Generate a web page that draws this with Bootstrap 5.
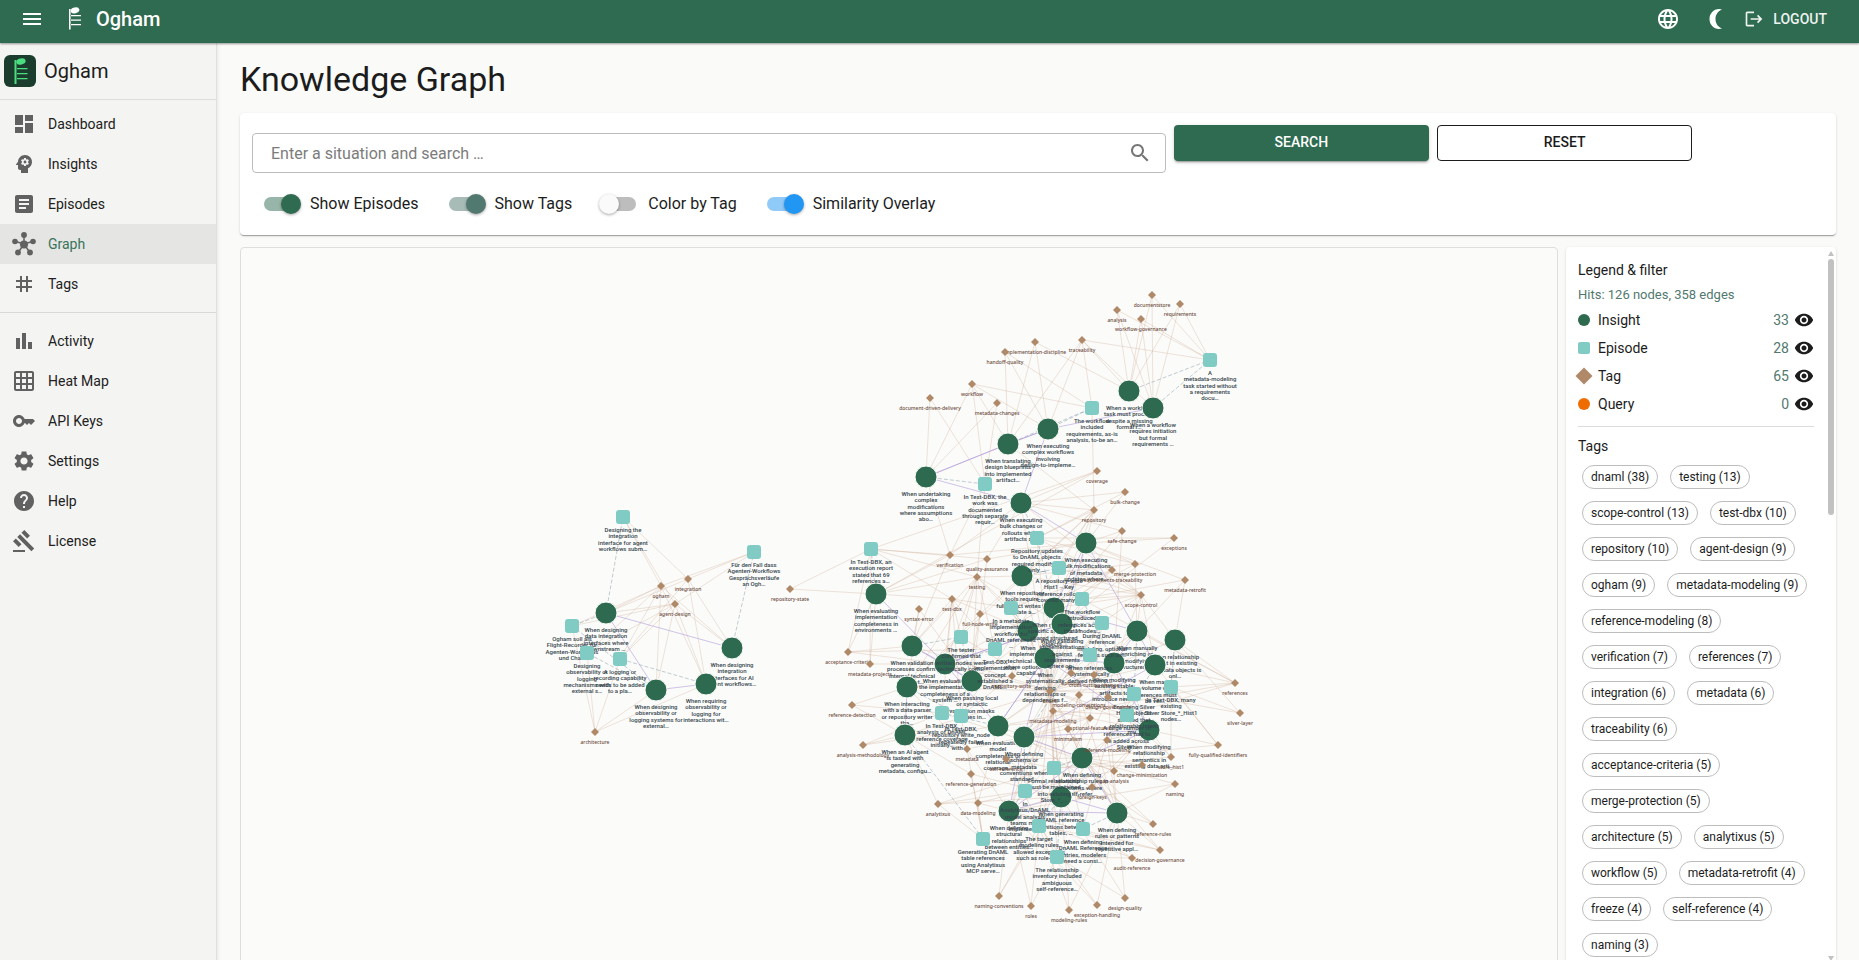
<!DOCTYPE html>
<html lang="en">
<head>
<meta charset="utf-8">
<meta name="viewport" content="width=device-width, initial-scale=1">
<title>Ogham – Knowledge Graph</title>
<link href="https://cdn.jsdelivr.net/npm/bootstrap@5.3.0/dist/css/bootstrap.min.css" rel="stylesheet">
<style>
  :root { --green: #2e6b50; --ink: #1c1c1c; --muted: #52796f; --line: #dededd; --paper: #fafaf8; }
  body { font-family: Roboto, "Liberation Sans", sans-serif; background: var(--paper); color: var(--ink); font-size: 16px; line-height: 24px; }
  svg.ico { width: 24px; height: 24px; fill: currentColor; flex: none; display: block; }
  svg.ico-sm { width: 20px; height: 20px; }
  .elev { box-shadow: 0 2px 1px -1px rgba(0,0,0,.2), 0 1px 1px 0 rgba(0,0,0,.14), 0 1px 3px 0 rgba(0,0,0,.12); }

  .topbar { height: 43px; flex: none; background: var(--green); color: #fff; padding: 0 24px 5px 20px; z-index: 2;
    box-shadow: 0 1px 2px rgba(0,0,0,.4); }
  .topbar button { background: none; border: 0; padding: 0; color: inherit; }
  .brand-top { font-size: 20px; font-weight: 500; margin-left: 4px; }
  .logout { font-size: 14px; font-weight: 500; gap: 9px; opacity: .92; }

  .drawer { width: 217px; flex: none; background: #f4f4f2; border-right: 1px solid var(--line); box-shadow: 1px 0 4px rgba(0,0,0,.08); }
  .drawer-head { height: 57px; padding-left: 4px; gap: 8px; border-bottom: 1px solid var(--line); font-size: 20px; }
  .drawer-head svg { width: 32px; height: 32px; }
  .drawer .nav-link { height: 40px; padding: 0 12px; gap: 12px; color: #212121; font-size: 14px; }
  .drawer .nav-link svg { color: #616161; }
  .drawer .nav-link.active { background: #e5e5e3; color: #38745a; }
  .drawer hr { margin: 8px 0; border-top: 1px solid #d8d8d7; opacity: 1; }

  .page { padding: 15px 23px 0; min-width: 0; }
  h1 { font-size: 34px; line-height: 42px; font-weight: 400; margin-bottom: 13px; }
  .search-card { border: 0; border-radius: 4px; padding: 12px; background: #fff; }
  .search-card .row { --bs-gutter-x: 8px; }
  .query { margin-top: 8px; height: 40px; border: 1px solid #bdbdbd; border-radius: 4px; padding: 0 13px 0 18px; color: #757575; }
  .query input { border: 0; padding: 2px 0 0; background: none; outline: 0; min-width: 0; }
  .query input::placeholder { color: #7c7c7c; }
  .query svg { color: #757575; }
  .act { height: 36px; border-radius: 4px; font-size: 14px; font-weight: 500; padding: 0 0 2px; }
  .act-go { background: var(--green); color: #fff; border: 0; box-shadow: 0 3px 1px -2px rgba(0,0,0,.2), 0 2px 2px rgba(0,0,0,.14), 0 1px 5px rgba(0,0,0,.12); }
  .act-reset { border: 1px solid #1c1c1c; color: #1c1c1c; background: #fff; }

  .toggles { gap: 18px; margin-top: 12px; }
  .toggle { height: 38px; padding-left: 12px; gap: 12px; cursor: pointer; --on: #2e6b50; --track: #97b5a8; }
  .toggle.teal { --on: #52796f; --track: #a8bcb7; }
  .toggle.blue { --on: #2196f3; --track: #90caf9; }
  .toggle input { appearance: none; position: relative; width: 34px; height: 14px; margin: 0; border-radius: 7px; background: #bdbdbd; }
  .toggle input::before { content: ""; position: absolute; top: -3px; left: -3px; width: 20px; height: 20px; border-radius: 50%;
    background: #fafafa; box-shadow: 0 1px 3px rgba(0,0,0,.35); }
  .toggle input:checked { background: var(--track); }
  .toggle input:checked::before { left: 17px; background: var(--on); }

  .stage { height: calc(100vh - 241px); gap: 8px; margin-top: 12px; }
  .canvas { min-width: 0; border: 1px solid var(--line); border-radius: 4px; background: #fbfbf9; overflow: hidden; }
  .canvas svg { width: 100%; height: 100%; display: block; }
  .node-label { font-family: Roboto, sans-serif; font-size: 6px; font-weight: 500; fill: #37474f; text-anchor: middle; }
  .tag-label { font-family: "Noto Sans", sans-serif; font-size: 5px; font-weight: 500; fill: #6d4c41; text-anchor: middle; }
  .e-tag { stroke: #c49a80; stroke-opacity: .27; }
  .e-src { stroke: #90a4ae; stroke-opacity: .55; stroke-dasharray: 4 2; }
  .e-sim { stroke: #b39ddb; stroke-opacity: .6; }

  .legend-panel { width: 270px; flex: none; background: #fff; border-radius: 4px; overflow: hidden; }
  .legend-body { padding: 13px 12px 0; width: 260px; }
  .cap-title { font-size: 14px; line-height: 20px; font-weight: 400; margin: 0 0 5px; }
  .hits { font-size: 13px; line-height: 20px; color: var(--muted); margin-bottom: 1px; }
  .kind { height: 28px; font-size: 14px; gap: 8px; }
  .kind .count { color: var(--muted); }
  .kind button { border: 0; background: none; padding: 0; margin-left: -3px; color: #1c1c1c; }
  .swatch { width: 12px; height: 12px; }
  .legend-body hr { margin: 8px 0 9px; border-top: 1px solid #dcdcdc; opacity: 1; }
  .cap-title.tags-title { margin-bottom: 9px; }
  .chips { gap: 12px; padding-left: 4px; }
  .chip { height: 24px; border: 1px solid #bdbdbd; border-radius: 12px; background: #fff; padding: 0 8px; font-size: 12px; line-height: 22px; color: #1c1c1c; }
  .rail { width: 10px; padding: 4px 2px 5px; }
  .rail i { width: 6px; height: 256px; margin-top: 3px; border-radius: 3px; background: #c1c1c1; }
  .rail svg { width: 6px; height: 5px; fill: #c1c1c1; display: block; }
</style>
</head>
<body class="vh-100 overflow-hidden d-flex flex-column">

<svg class="d-none" aria-hidden="true">
  <symbol id="eye" viewBox="0 0 24 24"><path d="M12 4.500C7 4.500 2.730 7.610 1 12c1.730 4.390 6 7.500 11 7.500s9.270-3.110 11-7.500c-1.730-4.390-6-7.500-11-7.500zM12 17c-2.760 0-5-2.240-5-5s2.240-5 5-5 5 2.240 5 5-2.240 5-5 5zm0-8c-1.660 0-3 1.340-3 3s1.340 3 3 3 3-1.340 3-3-1.340-3-3-3z"/></symbol>
</svg>

<header class="topbar d-flex align-items-center">
  <button type="button" aria-label="Menu"><svg class="ico" viewBox="0 0 24 24"><path d="M3 18h18v-2H3v2zm0-5h18v-2H3v2zm0-7v2h18V6H3z"/></svg></button>
  <svg class="ico ms-4" viewBox="0 0 24 24" aria-hidden="true"><path d="M1 2v20.500h1.600V2zM2 8h11v1.200H2zM2 12.500h11v1.200H2zM2 17h11v1.200H2z"/><ellipse cx="7" cy="3.400" rx="4.400" ry="2.900" transform="rotate(-15 7 3.400)"/></svg>
  <span class="brand-top me-auto">Ogham</span>
  <button type="button" aria-label="Language"><svg class="ico" viewBox="0 0 24 24"><path d="M11.990 2C6.470 2 2 6.480 2 12s4.470 10 9.990 10C17.520 22 22 17.520 22 12S17.520 2 11.990 2zm6.930 6h-2.950c-.32-1.250-.78-2.450-1.380-3.560 1.840.63 3.370 1.910 4.330 3.560zM12 4.040c.83 1.200 1.480 2.530 1.910 3.960h-3.820c.43-1.430 1.080-2.760 1.910-3.960zM4.260 14C4.100 13.360 4 12.690 4 12s.1-1.360.26-2h3.380c-.08.66-.14 1.320-.14 2s.06 1.340.14 2H4.260zm.82 2h2.950c.32 1.250.78 2.450 1.380 3.560-1.840-.63-3.370-1.900-4.330-3.560zm2.950-8H5.080c.96-1.660 2.490-2.930 4.330-3.560C8.810 5.550 8.350 6.750 8.030 8zM12 19.960c-.83-1.200-1.480-2.530-1.910-3.960h3.820c-.43 1.430-1.080 2.760-1.910 3.960zM14.340 14H9.660c-.09-.66-.16-1.320-.16-2s.07-1.350.16-2h4.680c.09.65.16 1.320.16 2s-.07 1.340-.16 2zm.25 5.560c.6-1.110 1.060-2.310 1.380-3.560h2.950c-.96 1.650-2.490 2.930-4.330 3.560zM16.360 14c.08-.66.14-1.320.14-2s-.06-1.340-.14-2h3.380c.16.64.26 1.310.26 2s-.1 1.360-.26 2h-3.380z"/></svg></button>
  <button type="button" class="ms-4" aria-label="Dark mode"><svg class="ico" viewBox="0 0 24 24"><path d="M15 2c1 0 2 .2 3 .5-4 1.500-6.500 5-6.500 9.500s2.500 8 6.500 9.500c-1 .3-2 .5-3 .5C9.500 22 5.500 17.500 5.500 12S9.500 2 15 2z"/></svg></button>
  <button type="button" class="logout d-flex align-items-center ms-3 pe-2"><svg class="ico ico-sm" viewBox="0 0 24 24"><path d="M17 7l-1.410 1.410L18.170 11H8v2h10.170l-2.580 2.580L17 17l5-5zM4 5h8V3H4c-1.100 0-2 .9-2 2v14c0 1.100.9 2 2 2h8v-2H4V5z"/></svg>LOGOUT</button>
</header>

<div class="d-flex flex-grow-1">
  <aside class="drawer">
    <div class="drawer-head d-flex align-items-center">
      <svg viewBox="0 0 32 32" aria-hidden="true"><rect width="32" height="32" rx="6" fill="#1b3d2e"/><g fill="#4ade80"><path d="M10.500 5v24h2V5zM12 13h11.500v1.300H12zM12 18h11.500v1.300H12zM12 23h11.500v1.300H12z"/><ellipse cx="17" cy="6.500" rx="4.700" ry="3" transform="rotate(-12 17 6.500)"/></g></svg>
      <span>Ogham</span>
    </div>
    <nav class="nav flex-column flex-nowrap pt-1">
      <a class="nav-link d-flex align-items-center" href="#"><svg class="ico" viewBox="0 0 24 24"><path d="M3 13h8V3H3v10zm0 8h8v-6H3v6zm10 0h8V11h-8v10zm0-18v6h8V3h-8z"/></svg>Dashboard</a>
      <a class="nav-link d-flex align-items-center" href="#"><svg class="ico" viewBox="0 0 24 24"><path d="M13 8.570c-.79 0-1.430.64-1.430 1.430s.64 1.430 1.430 1.430 1.430-.64 1.430-1.430-.64-1.430-1.430-1.430z"/><path d="M13 3C9.250 3 6.200 5.940 6.020 9.640L4.100 12.200c-.25.33-.01.8.4.8H6v3c0 1.100.9 2 2 2h1v3h7v-4.680c2.360-1.120 4-3.530 4-6.320 0-3.870-3.130-7-7-7zm3 7c0 .13-.01.26-.02.39l.83.66c.08.06.1.16.05.25l-.8 1.390c-.05.09-.16.12-.24.09l-.99-.4c-.21.16-.43.29-.67.39L14 13.830c-.01.1-.1.17-.2.17h-1.600c-.1 0-.18-.07-.2-.17l-.15-1.060c-.25-.1-.47-.23-.68-.39l-.99.4c-.09.03-.2 0-.25-.09l-.8-1.390c-.05-.08-.03-.19.05-.25l.84-.66c-.01-.13-.02-.26-.02-.39s.02-.27.04-.39l-.85-.66c-.08-.06-.1-.16-.05-.26l.8-1.380c.05-.09.15-.12.24-.09l1 .4c.2-.15.43-.29.67-.39L12 6.170c.02-.1.1-.17.2-.17h1.600c.1 0 .18.07.2.17l.15 1.060c.24.1.46.23.67.39l1-.4c.09-.03.2 0 .24.09l.8 1.380c.05.09.03.2-.05.26l-.85.66c.03.12.04.25.04.39z"/></svg>Insights</a>
      <a class="nav-link d-flex align-items-center" href="#"><svg class="ico" viewBox="0 0 24 24"><path d="M19 3H5c-1.100 0-2 .9-2 2v14c0 1.100.9 2 2 2h14c1.100 0 2-.9 2-2V5c0-1.100-.9-2-2-2zm-5 14H7v-2h7v2zm3-4H7v-2h10v2zm0-4H7V7h10v2z"/></svg>Episodes</a>
      <a class="nav-link active d-flex align-items-center" href="#" aria-current="page"><svg class="ico" viewBox="0 0 24 24"><path d="M12 4v8M3.500 9.500 12 12M20.500 9.500 12 12M6.500 20 12 12M17.500 20 12 12" stroke="currentColor" stroke-width="1.500"/><circle cx="12" cy="12.500" r="4"/><circle cx="12" cy="3" r="2.900"/><circle cx="3" cy="9.500" r="2.800"/><circle cx="21" cy="9.500" r="2.800"/><circle cx="6" cy="20.500" r="2.900"/><circle cx="18" cy="20.500" r="2.900"/></svg>Graph</a>
      <a class="nav-link d-flex align-items-center" href="#"><svg class="ico" viewBox="0 0 24 24"><path d="M20 10V8h-4V4h-2v4h-4V4H8v4H4v2h4v4H4v2h4v4h2v-4h4v4h2v-4h4v-2h-4v-4h4zm-6 4h-4v-4h4v4z"/></svg>Tags</a>
      <hr>
      <a class="nav-link d-flex align-items-center" href="#"><svg class="ico" viewBox="0 0 24 24"><path d="M4 9h4v11H4zM10 4h4v16h-4zM16 13h4v7h-4z"/></svg>Activity</a>
      <a class="nav-link d-flex align-items-center" href="#"><svg class="ico" viewBox="0 0 24 24"><path d="M20 2H4c-1.100 0-2 .9-2 2v16c0 1.100.9 2 2 2h16c1.100 0 2-.9 2-2V4c0-1.100-.9-2-2-2zM8 20H4v-4h4v4zm0-6H4v-4h4v4zm0-6H4V4h4v4zm6 12h-4v-4h4v4zm0-6h-4v-4h4v4zm0-6h-4V4h4v4zm6 12h-4v-4h4v4zm0-6h-4v-4h4v4zm0-6h-4V4h4v4z"/></svg>Heat Map</a>
      <a class="nav-link d-flex align-items-center" href="#"><svg class="ico" viewBox="0 0 24 24"><path d="M21 10h-8.350C11.830 7.670 9.610 6 7 6c-3.310 0-6 2.690-6 6s2.690 6 6 6c2.610 0 4.830-1.670 5.650-4H13l2 2 2-2 2 2 4-4.040L21 10zM7 15c-1.650 0-3-1.350-3-3s1.350-3 3-3 3 1.350 3 3-1.350 3-3 3z"/></svg>API Keys</a>
      <a class="nav-link d-flex align-items-center" href="#"><svg class="ico" viewBox="0 0 24 24"><path d="M19.140 12.940c.04-.3.06-.61.06-.94 0-.32-.02-.64-.07-.94l2.030-1.580c.18-.14.23-.41.12-.61l-1.920-3.320c-.12-.22-.37-.29-.59-.22l-2.390.96c-.5-.38-1.030-.7-1.620-.94l-.36-2.540c-.04-.24-.24-.41-.48-.41h-3.840c-.24 0-.43.17-.47.41l-.36 2.540c-.59.24-1.130.57-1.620.94l-2.390-.96c-.22-.08-.47 0-.59.22L2.740 8.870c-.12.21-.08.47.12.61l2.030 1.580c-.05.3-.09.63-.09.94s.02.64.07.94l-2.030 1.580c-.18.14-.23.41-.12.61l1.920 3.320c.12.22.37.29.59.22l2.390-.96c.5.38 1.030.7 1.620.94l.36 2.540c.05.24.24.41.48.41h3.840c.24 0 .44-.17.47-.41l.36-2.540c.59-.24 1.130-.56 1.620-.94l2.390.96c.22.08.47 0 .59-.22l1.920-3.320c.12-.22.07-.47-.12-.61l-2.010-1.580zM12 15.600c-1.980 0-3.600-1.620-3.600-3.600s1.620-3.600 3.600-3.600 3.600 1.620 3.600 3.600-1.620 3.600-3.600 3.600z"/></svg>Settings</a>
      <a class="nav-link d-flex align-items-center" href="#"><svg class="ico" viewBox="0 0 24 24"><path d="M12 2C6.480 2 2 6.480 2 12s4.480 10 10 10 10-4.480 10-10S17.520 2 12 2zm1 17h-2v-2h2v2zm2.070-7.750l-.9.920C13.450 12.900 13 13.500 13 15h-2v-.5c0-1.100.45-2.100 1.170-2.830l1.240-1.260c.37-.36.59-.86.59-1.410 0-1.100-.9-2-2-2s-2 .9-2 2H8c0-2.210 1.790-4 4-4s4 1.790 4 4c0 .88-.36 1.680-.93 2.250z"/></svg>Help</a>
      <a class="nav-link d-flex align-items-center" href="#"><svg class="ico" viewBox="0 0 24 24"><path d="M1 21h12v2H1zM5.245 8.070l2.830-2.827 14.140 14.142-2.828 2.828zM12.317 1l5.657 5.656-2.830 2.830-5.654-5.660zM3.825 9.485l5.657 5.657-2.828 2.828-5.657-5.657z"/></svg>License</a>
    </nav>
  </aside>

  <main class="page flex-grow-1">
    <h1>Knowledge Graph</h1>

    <form class="card search-card elev" onsubmit="return false">
      <div class="row">
        <div class="col-7">
          <label class="query d-flex align-items-center">
            <input class="flex-grow-1" type="text" placeholder="Enter a situation and search …" aria-label="Enter a situation and search">
            <svg class="ico" viewBox="0 0 24 24" aria-hidden="true"><path d="M15.500 14h-.79l-.28-.27C15.410 12.590 16 11.110 16 9.500 16 5.910 13.090 3 9.500 3S3 5.910 3 9.500 5.910 16 9.500 16c1.610 0 3.090-.59 4.230-1.570l.27.28v.79l5 4.990L20.490 19l-4.990-5zm-6 0C7.010 14 5 11.990 5 9.500S7.010 5 9.500 5 14 7.010 14 9.500 11.990 14 9.500 14z"/></svg>
          </label>
        </div>
        <div class="col-2"><button class="act act-go w-100" type="submit">SEARCH</button></div>
        <div class="col-2"><button class="act act-reset w-100" type="reset">RESET</button></div>
      </div>
      <div class="toggles d-flex flex-wrap">
        <label class="toggle d-flex align-items-center"><input type="checkbox" checked>Show Episodes</label>
        <label class="toggle teal d-flex align-items-center"><input type="checkbox" checked>Show Tags</label>
        <label class="toggle d-flex align-items-center"><input type="checkbox">Color by Tag</label>
        <label class="toggle blue d-flex align-items-center"><input type="checkbox" checked>Similarity Overlay</label>
      </div>
    </form>

    <div class="stage d-flex">
      <section class="canvas flex-grow-1">
        <svg id="graph" viewBox="241 247 1316 717" role="img" aria-label="Knowledge graph"></svg>
      </section>

      <aside class="legend-panel elev d-flex">
        <div class="legend-body">
          <h2 class="cap-title">Legend &amp; filter</h2>
          <div class="hits">Hits: 126 nodes, 358 edges</div>
          <div class="kind d-flex align-items-center"><svg class="swatch" viewBox="0 0 12 12"><circle cx="6" cy="6" r="6" fill="#2d6a4f"/></svg><span class="me-auto">Insight</span><span class="count">33</span><button type="button" aria-label="Toggle insights"><svg class="ico ico-sm"><use href="#eye"/></svg></button></div>
          <div class="kind d-flex align-items-center"><svg class="swatch" viewBox="0 0 12 12"><rect width="12" height="12" rx="2" fill="#80cbc4"/></svg><span class="me-auto">Episode</span><span class="count">28</span><button type="button" aria-label="Toggle episodes"><svg class="ico ico-sm"><use href="#eye"/></svg></button></div>
          <div class="kind d-flex align-items-center"><svg class="swatch overflow-visible" viewBox="0 0 12 12"><path d="M6-2.500 14.500 6 6 14.500-2.500 6z" fill="#b08968"/></svg><span class="me-auto">Tag</span><span class="count">65</span><button type="button" aria-label="Toggle tags"><svg class="ico ico-sm"><use href="#eye"/></svg></button></div>
          <div class="kind d-flex align-items-center"><svg class="swatch" viewBox="0 0 12 12"><circle cx="6" cy="6" r="6" fill="#ef6c00"/></svg><span class="me-auto">Query</span><span class="count">0</span><button type="button" aria-label="Toggle queries"><svg class="ico ico-sm"><use href="#eye"/></svg></button></div>
          <hr>
          <h2 class="cap-title tags-title">Tags</h2>
          <div class="chips d-flex flex-wrap">
            <button type="button" class="chip">dnaml (38)</button><button type="button" class="chip">testing (13)</button>
            <button type="button" class="chip">scope-control (13)</button><button type="button" class="chip">test-dbx (10)</button>
            <button type="button" class="chip">repository (10)</button><button type="button" class="chip">agent-design (9)</button>
            <button type="button" class="chip">ogham (9)</button><button type="button" class="chip">metadata-modeling (9)</button>
            <button type="button" class="chip">reference-modeling (8)</button>
            <button type="button" class="chip">verification (7)</button><button type="button" class="chip">references (7)</button>
            <button type="button" class="chip">integration (6)</button><button type="button" class="chip">metadata (6)</button>
            <button type="button" class="chip">traceability (6)</button>
            <button type="button" class="chip">acceptance-criteria (5)</button>
            <button type="button" class="chip">merge-protection (5)</button>
            <button type="button" class="chip">architecture (5)</button><button type="button" class="chip">analytixus (5)</button>
            <button type="button" class="chip">workflow (5)</button><button type="button" class="chip">metadata-retrofit (4)</button>
            <button type="button" class="chip">freeze (4)</button><button type="button" class="chip">self-reference (4)</button>
            <button type="button" class="chip">naming (3)</button>
          </div>
        </div>
        <div class="rail d-flex flex-column" aria-hidden="true">
          <svg viewBox="0 0 6 5"><path d="M3 0 6 5H0z"/></svg>
          <i></i>
          <svg class="mt-auto" viewBox="0 0 6 5"><path d="M0 0h6L3 5z"/></svg>
        </div>
      </aside>
    </div>
  </main>
</div>

<script>
// Each insight and episode: x, y, label lines separated by "|".
const insights = [
  [606,612,'When designing|data integration|interfaces where|downstream ...'],
  [732,647,'When designing|integration|interfaces for AI|agent workflows...'],
  [656,689,'When designing|observability or|logging systems for|external...'],
  [706,683,'When requiring|observability or|logging for|interactions wit...'],
  [926,476,'When undertaking|complex|modifications|where assumptions|abo...'],
  [1008,443,'When translating|design blueprints|into implemented|artifact...'],
  [1048,428,'When executing|complex workflows|involving|design-to-impleme...'],
  [1021,502,'When executing|bulk changes or|rollouts where|artifacts ar...'],
  [1022,575,'When repository|tools require|full object writes to|update a...'],
  [876,593,'When evaluating|implementation|completeness in|environments ...'],
  [1129,390,'When a workflow|task must proceed|despite a missing|formal r...'],
  [1153,407,'When a workflow|requires initiation|but formal|requirements ...'],
  [1086,542,'When executing|bulk modifications|of metadata|updates where...'],
  [912,645,'When validation|processes confirm|internal technical|consist...'],
  [945,663,'When evaluating|the implementation|completeness of a|system ...'],
  [972,680,'When passing local|or syntactic|validation masks|issues in...'],
  [907,686,'When interacting|with a data parser|or repository writer|tha...'],
  [905,734,'When an AI agent|is tasked with|generating|metadata, configu...'],
  [998,725,'When evaluating|model|completeness or|relational|coverage...'],
  [1024,736,'When defining|schema or|metadata|conventions when|standard...'],
  [1028,630,'When|implementing|technical areas|where options are|capabil...'],
  [1045,657,'When|systematically|deriving|relationships or|dependencies f...'],
  [1054,607,'When modifying|specific sections of|shared structured|objects...'],
  [1062,623,'When validating|implementations|against|requirements|where op...'],
  [1137,630,'When manually|enriching or|modifying|structures w...'],
  [1175,639,'When relationship|intent in existing|metadata objects is|onl...'],
  [1114,662,'When modifying|existing stable|artifacts to|introduce new ...'],
  [1155,664,'When many|volume of|references must|be ver...'],
  [1149,729,'When modifying|relationship|semantics in|existing data arti...'],
  [1082,757,'When defining|relationship rules in|systems where|self-refer...'],
  [1061,796,'When generating|DnAML reference|definitions between|tables, ...'],
  [1009,810,'When defining|structural|relationships|between entities...'],
  [1117,812,'When defining|rules or patterns|intended for|repetitive appl...']
];
const episodes = [
  [623,516,'Designing the|integration|interface for agent|workflows subm...'],
  [754,551,'Für den Fall dass|Agenten-Workflows|Gesprächsverläufe|an Ogh...'],
  [572,625,'Ogham soll als|Flight-Recorder für|Agenten-Workflows|und Cha...'],
  [587,652,'Designing|observability or|logging|mechanisms with|external s...'],
  [620,658,'A logging or|recording capability|needs to be added|to a pla...'],
  [985,483,'In Test-DBX, the|work was|documented|through separate|requir...'],
  [871,548,'In Test-DBX, an|execution report|stated that 69|references a...'],
  [1037,537,'Repository updates|to DnAML objects|required modifying|only ...'],
  [1210,359,'A|metadata-modeling|task started without|a requirements|docu...'],
  [1092,407,'The workflow|included|requirements, as-is|analysis, to-be an...'],
  [1059,567,'A repository-wide|Hist1→Key|reference rollout|covered many ...'],
  [1082,598,'The workflow|introduced|references across|Hist1 nodes...'],
  [1102,622,'During DnAML|reference|modeling, optional|features such as...'],
  [1090,654,'When references|systematically|derived from st...'],
  [1134,693,'Enriching Silver|Hist1 objects|showed that|relationship intent|mu...'],
  [1171,686,'In Test-DBX, many|existing|Silver Store_*_Hist1|nodes...'],
  [1127,714,'A large number of|references had to|be added across|Silver ...'],
  [1011,607,'In a metadata|implementation|workflow for|DnAML references|...'],
  [961,636,'The tester|confirmed that|written nodes were|technically com...'],
  [995,648,'Test-DBX|implementation|concept|established a|DnAML...'],
  [942,712,'In Test-DBX,|analysis of DnAML|reference coverage|initially...'],
  [961,715,'In Test-DBX,|repository write_node|repeatedly failed|with r...'],
  [1054,767,'Formal relationship|must be maintained|into existing|Store_*_...'],
  [1025,790,'In|Analytixus/DnAML|model analysis|teams may|implement...'],
  [1039,825,'The target|modeling rules|allowed exceptions|such as role-ba...'],
  [1083,828,'When defining|DnAML Reference|entries, modelers|need a consi...'],
  [983,838,'Generating DnAML|table references|using Analytixus|MCP serve...'],
  [1057,856,'The relationship|inventory included|ambiguous|self-reference...']
];
// Each tag: x, y, name, and the nodes that carry it (i = insight, e = episode, counted from 1).
const tags = [
  [661,585,'ogham','i1 i2 i3 i4 e1 e2 e3 e4 e5'],
  [688,578,'integration','i1 i2 i4 e1 e2 e5'],
  [675,603,'agent-design','i1 i2 i3 i4 e1 e2 e3 e4 e5'],
  [790,588,'repository-state','i10 e7'],
  [595,731,'architecture','i3 i4 e3 e4 e5'],
  [1035,341,'implementation-discipline','i6 i7 i11'],
  [1005,351,'handoff-quality','i6 i7 e10'],
  [972,383,'workflow','i5 i6 i7 e6 e10'],
  [930,397,'document-driven-delivery','i5 e6'],
  [997,402,'metadata-changes','i5 e6'],
  [950,554,'verification','i5 i10 i14 i8 e7 e6 i13'],
  [987,558,'quality-assurance','i10 i8 i13 i16 e7'],
  [977,576,'testing','i10 i14 i15 i16 i17 i21 i9 i24 e7 e6 e18 e19 e20'],
  [1152,294,'documentstore','i11 i12 e9'],
  [1180,303,'requirements','i11 i12 e9'],
  [1117,309,'analysis','i11 i12 e9'],
  [1141,318,'workflow-governance','i11 i12 e9'],
  [1082,339,'traceability','i6 i7 i11 i12 e9 e10'],
  [1097,470,'coverage','i8 i10 e7'],
  [1125,491,'bulk-change','i8 i13 e8'],
  [1094,509,'repository','i8 i6 i13 i9 i17 i23 e8 e10 e11 e22'],
  [1122,530,'safe-change','i13 i8 i23 i27'],
  [1174,537,'exceptions','i13 i24 e8'],
  [1135,563,'merge-protection','i13 i23 i25 i9 e8'],
  [1112,569,'requirements-traceability','i24 i15 e18 i16'],
  [1185,579,'metadata-retrofit','i26 i25 e12 i13'],
  [1141,594,'scope-control','i13 i8 i9 i23 i24 i25 i26 i27 i28 e8 e11 e13 e12'],
  [1235,682,'references','i26 i28 i25 i19 e16 e12 e17'],
  [1240,712,'silver-layer','i26 e15 e16'],
  [1218,744,'fully-qualified-identifiers','i29 i28 i30 e16'],
  [1071,672,'optional','i21 i24 e13 i19'],
  [1094,674,'cross-cutting-change','i27 i22 e14 i25'],
  [1050,690,'dnaml','i8 i9 i13 i14 i15 i16 i17 i18 i19 i20 i21 i22 i23 i24 i25 i26 i27 i28 i29 i30 i31 i32 i33 e8 e11 e12 e13 e14 e15 e16 e17 e18 e19 e23 e24 e25 e26 e28'],
  [1079,694,'modeling-conventions','i20 i30 i27 i33 e25'],
  [1108,696,'design-governance','i27 i30 e14 i33'],
  [1053,710,'metadata-modeling','i20 i21 i22 i29 i31 i32 e24 e23 e17'],
  [1090,717,'optional-features','i19 i20 e13 i32 e25'],
  [1068,728,'minimalism','i20 i30 e13 i33'],
  [1107,739,'reference-modeling','i29 i30 i31 i33 i20 e17 e15 e26'],
  [1171,756,'store_hist1','i29 e16 e23 e17'],
  [952,598,'test-dbx','i10 i14 i15 i21 e7 e18 e19 e20 e21 e22'],
  [919,608,'syntax-error','i14 i17 i16'],
  [980,613,'full-node-write','i9 e22 i17'],
  [848,651,'acceptance-criteria','i10 i14 i15 e7 e20'],
  [870,663,'metadata-projects','i10 e7 i15'],
  [1012,675,'repository-write','i17 i9 e22 i23'],
  [852,704,'reference-detection','i18 i17 e21'],
  [863,744,'analysis-methodology','i18 i19 e21'],
  [967,748,'metadata','i18 i17 i20 i32 e22 e27'],
  [1006,758,'self-reference','i30 i31 e28 e23'],
  [971,773,'reference-generation','i18 i31 e27'],
  [938,803,'analytixus','i18 i30 i31 e27 e24'],
  [978,802,'data-modeling','i19 i32 e27 e24'],
  [999,895,'naming-conventions','i32 i31 e25'],
  [1031,905,'roles','i32 e25 e28'],
  [1069,909,'modeling-rules','i31 i33 e25'],
  [1097,904,'exception-handling','i33 i32 e25'],
  [1125,897,'design-quality','i33 i31 e28'],
  [1132,857,'audit-reference','i32 e28 e26'],
  [1160,849,'decision-governance','i32 i33 i30 e25'],
  [1153,823,'reference-rules','i30 i33 i20'],
  [1092,786,'foreign-keys','i31 i29 e23 i32'],
  [1114,770,'gap-analysis','i19 i29 e21 e24'],
  [1142,764,'change-minimization','i29 i30 e23 i27'],
  [1175,783,'naming','i30 i33 i32']
];
const sources = 'i1-e1 i2-e2 i1-e3 i3-e4 i4-e5 i3-e3 i5-e6 i6-e10 i7-e10 i11-e9 i12-e9 i8-e8 i9-e11 i10-e7 i14-e19 i15-e20 i16-e19 i17-e22 i18-e27 i19-e21 i20-e24 i21-e18 i22-e14 i23-e8 i24-e13 i25-e15 i26-e16 i27-e12 i28-e17 i29-e15 i30-e23 i31-e28 i32-e24 i33-e26 i20-e13 i31-e25';
const similar = 'i1-i2 i1-i3 i3-i4 i5-i6 i5-i6 i5-i8 i6-i7 i6-i7 i7-i8 i7-i12 i8-i13 i13-i24 i13-i25 i13-i23 i10-i15 i14-i15 i14-i16 i15-i16 i15-i24 i15-i24 i19-i22 i19-i22 i20-i22 i20-i30 i20-i32 i20-i29 i29-i30 i30-i33 i30-i31 i31-i32 i32-i33 i31-i33 i27-i25 i28-i25 i27-i29 i22-i27 i23-i25 i19-i15 i20-i28 i22-i29 i30-i32 i18-i17';

const svg = document.getElementById('graph');
const el = (name, attrs, text) => {
  const n = document.createElementNS('http://www.w3.org/2000/svg', name);
  for (const k in attrs) n.setAttribute(k, attrs[k]);
  if (text) n.textContent = text;
  svg.appendChild(n);
};
const find = id => (id[0] === 'i' ? insights : episodes)[id.slice(1) - 1];
const line = (a, b, cls) => el('line', { x1: a[0], y1: a[1], x2: b[0], y2: b[1], class: cls });
const pairs = (list, cls) => list.split(' ').forEach(p => { const [a, b] = p.split('-'); line(find(a), find(b), cls); });
const label = (x, y, lines) => lines.split('|').forEach((t, i) =>
  el('text', { x, y: y + Math.round(i * 19 / 3), class: 'node-label' }, t.replace('...', '…')));

tags.forEach(t => t[3].split(' ').forEach(id => line(t, find(id), 'e-tag')));
pairs(sources, 'e-src');
pairs(similar, 'e-sim');
insights.forEach(([x, y, t]) => {
  el('circle', { cx: x, cy: y, r: 11, fill: '#2d6a4f', stroke: '#fbfbf9' });
  label(x, y + 19, t);
});
episodes.forEach(([x, y, t]) => {
  el('rect', { x: x - 7, y: y - 7, width: 14, height: 14, rx: 3, fill: '#80cbc4' });
  label(x, y + 15, t);
});
tags.forEach(([x, y, t]) => {
  el('path', { d: `M${x} ${y - 4}l4 4-4 4-4-4z`, fill: '#b08968' });
  el('text', { x, y: y + 12, class: 'tag-label' }, t);
});
</script>
<script src="https://cdn.jsdelivr.net/npm/bootstrap@5.3.0/dist/js/bootstrap.bundle.min.js"></script>
</body>
</html>
